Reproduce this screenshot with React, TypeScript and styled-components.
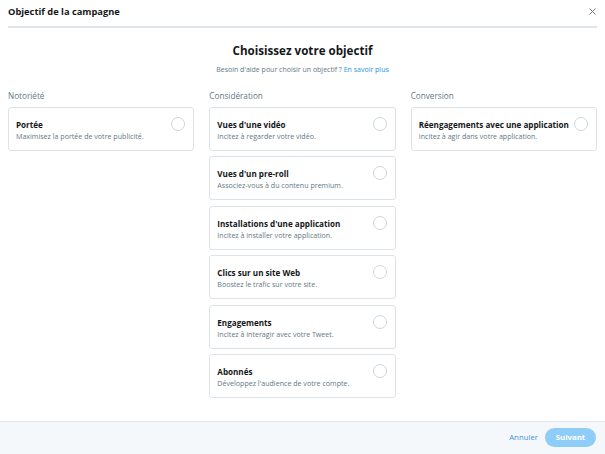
import React from "react";
import styled, { createGlobalStyle } from "styled-components";

const GlobalStyle = createGlobalStyle`
  html, body { margin: 0; padding: 0; background: #ffffff; }
  body { font-family: "Open Sans", "Noto Sans", sans-serif; color: #14171a; }
  * { box-sizing: border-box; }
`;

type Objective = { title: string; desc: string };

const columns: { label: string; items: Objective[] }[] = [
  {
    label: "Notoriété",
    items: [{ title: "Portée", desc: "Maximisez la portée de votre publicité." }],
  },
  {
    label: "Considération",
    items: [
      { title: "Vues d'une vidéo", desc: "Incitez à regarder votre vidéo." },
      { title: "Vues d'un pre-roll", desc: "Associez-vous à du contenu premium." },
      { title: "Installations d'une application", desc: "Incitez à installer votre application." },
      { title: "Clics sur un site Web", desc: "Boostez le trafic sur votre site." },
      { title: "Engagements", desc: "Incitez à interagir avec votre Tweet." },
      { title: "Abonnés", desc: "Développez l'audience de votre compte." },
    ],
  },
  {
    label: "Conversion",
    items: [
      { title: "Réengagements avec une application", desc: "Incitez à agir dans votre application." },
    ],
  },
];

const Page = styled.div`
  height: 454px;
  display: flex;
  flex-direction: column;
`;

const Header = styled.div`
  height: 28px;
  margin: 0 8px;
  display: flex;
  align-items: center;
  justify-content: space-between;
  border-bottom: 2px solid #dfe4e8;
  padding-bottom: 4px;
`;

const ModalTitle = styled.h1`
  margin: 0;
  font-size: 9.3px;
  font-weight: 700;
  color: #14171a;
`;

const CloseButton = styled.button`
  border: 0;
  background: none;
  padding: 0;
  width: 10px;
  height: 10px;
  display: flex;
  align-items: center;
  justify-content: center;
  cursor: pointer;
`;

const Main = styled.div`
  flex: 1;
  padding: 0 8px;
`;

const Intro = styled.div`
  text-align: center;
  padding-top: 14px;
`;

const Heading = styled.h2`
  margin: 0;
  font-size: 11.6px;
  line-height: 18px;
  font-weight: 700;
  color: #14171a;
`;

const Help = styled.p`
  margin: 5px 0 0;
  font-size: 7px;
  line-height: 10px;
  color: #657786;
`;

const HelpLink = styled.a`
  color: #1b95e0;
  text-decoration: none;
`;

const Grid = styled.div`
  margin-top: 16px;
  display: grid;
  grid-template-columns: repeat(3, 1fr);
  column-gap: 15px;
`;

const Column = styled.div`
  display: flex;
  flex-direction: column;
`;

const ColumnLabel = styled.div`
  font-size: 8.2px;
  line-height: 10px;
  color: #657786;
  margin-bottom: 6px;
`;

const Cards = styled.div`
  display: flex;
  flex-direction: column;
  gap: 5.4px;
`;

const Card = styled.div`
  height: 44px;
  border: 1px solid #dde3e8;
  border-radius: 3px;
  padding: 0 7px;
  display: flex;
  align-items: flex-start;
  justify-content: space-between;
  cursor: pointer;
`;

const CardText = styled.div`
  padding-top: 11px;
  min-width: 0;
`;

const CardTitle = styled.div`
  font-size: 8.1px;
  line-height: 12px;
  font-weight: 700;
  color: #14171a;
  white-space: nowrap;
`;

const CardDesc = styled.div`
  margin-top: 1px;
  font-size: 7.1px;
  line-height: 9px;
  color: #657786;
  white-space: nowrap;
`;

const Radio = styled.span`
  flex: none;
  width: 14px;
  height: 14px;
  margin-top: 9px;
  margin-right: 1px;
  border: 1px solid #ccd6dd;
  border-radius: 50%;
  background: #fff;
`;

const Footer = styled.div`
  height: 33px;
  border-top: 1px solid #e1e8ed;
  background: #f5f8fa;
  display: flex;
  align-items: center;
  justify-content: flex-end;
  gap: 7px;
  padding: 0 9px 2px;
`;

const CancelButton = styled.button`
  border: 0;
  background: none;
  padding: 0;
  font-family: inherit;
  font-size: 7.8px;
  color: #3b94d9;
  cursor: pointer;
`;

const NextButton = styled.button`
  border: 0;
  height: 19px;
  width: 51px;
  border-radius: 10px;
  background: #8ecdf8;
  color: #ffffff;
  font-family: inherit;
  font-size: 7.8px;
  font-weight: 700;
  cursor: default;
`;

export default function App() {
  return (
    <Page>
      <GlobalStyle />
      <Header>
        <ModalTitle>Objectif de la campagne</ModalTitle>
        <CloseButton aria-label="Fermer">
          <svg width="7" height="7" viewBox="0 0 7 7">
            <path d="M0.5 0.5 L6.5 6.5 M6.5 0.5 L0.5 6.5" stroke="#657786" strokeWidth="1" />
          </svg>
        </CloseButton>
      </Header>
      <Main>
        <Intro>
          <Heading>Choisissez votre objectif</Heading>
          <Help>
            Besoin d'aide pour choisir un objectif ? <HelpLink href="#">En savoir plus</HelpLink>
          </Help>
        </Intro>
        <Grid>
          {columns.map((col) => (
            <Column key={col.label}>
              <ColumnLabel>{col.label}</ColumnLabel>
              <Cards>
                {col.items.map((item) => (
                  <Card key={item.title}>
                    <CardText>
                      <CardTitle>{item.title}</CardTitle>
                      <CardDesc>{item.desc}</CardDesc>
                    </CardText>
                    <Radio />
                  </Card>
                ))}
              </Cards>
            </Column>
          ))}
        </Grid>
      </Main>
      <Footer>
        <CancelButton>Annuler</CancelButton>
        <NextButton disabled>Suivant</NextButton>
      </Footer>
    </Page>
  );
}
